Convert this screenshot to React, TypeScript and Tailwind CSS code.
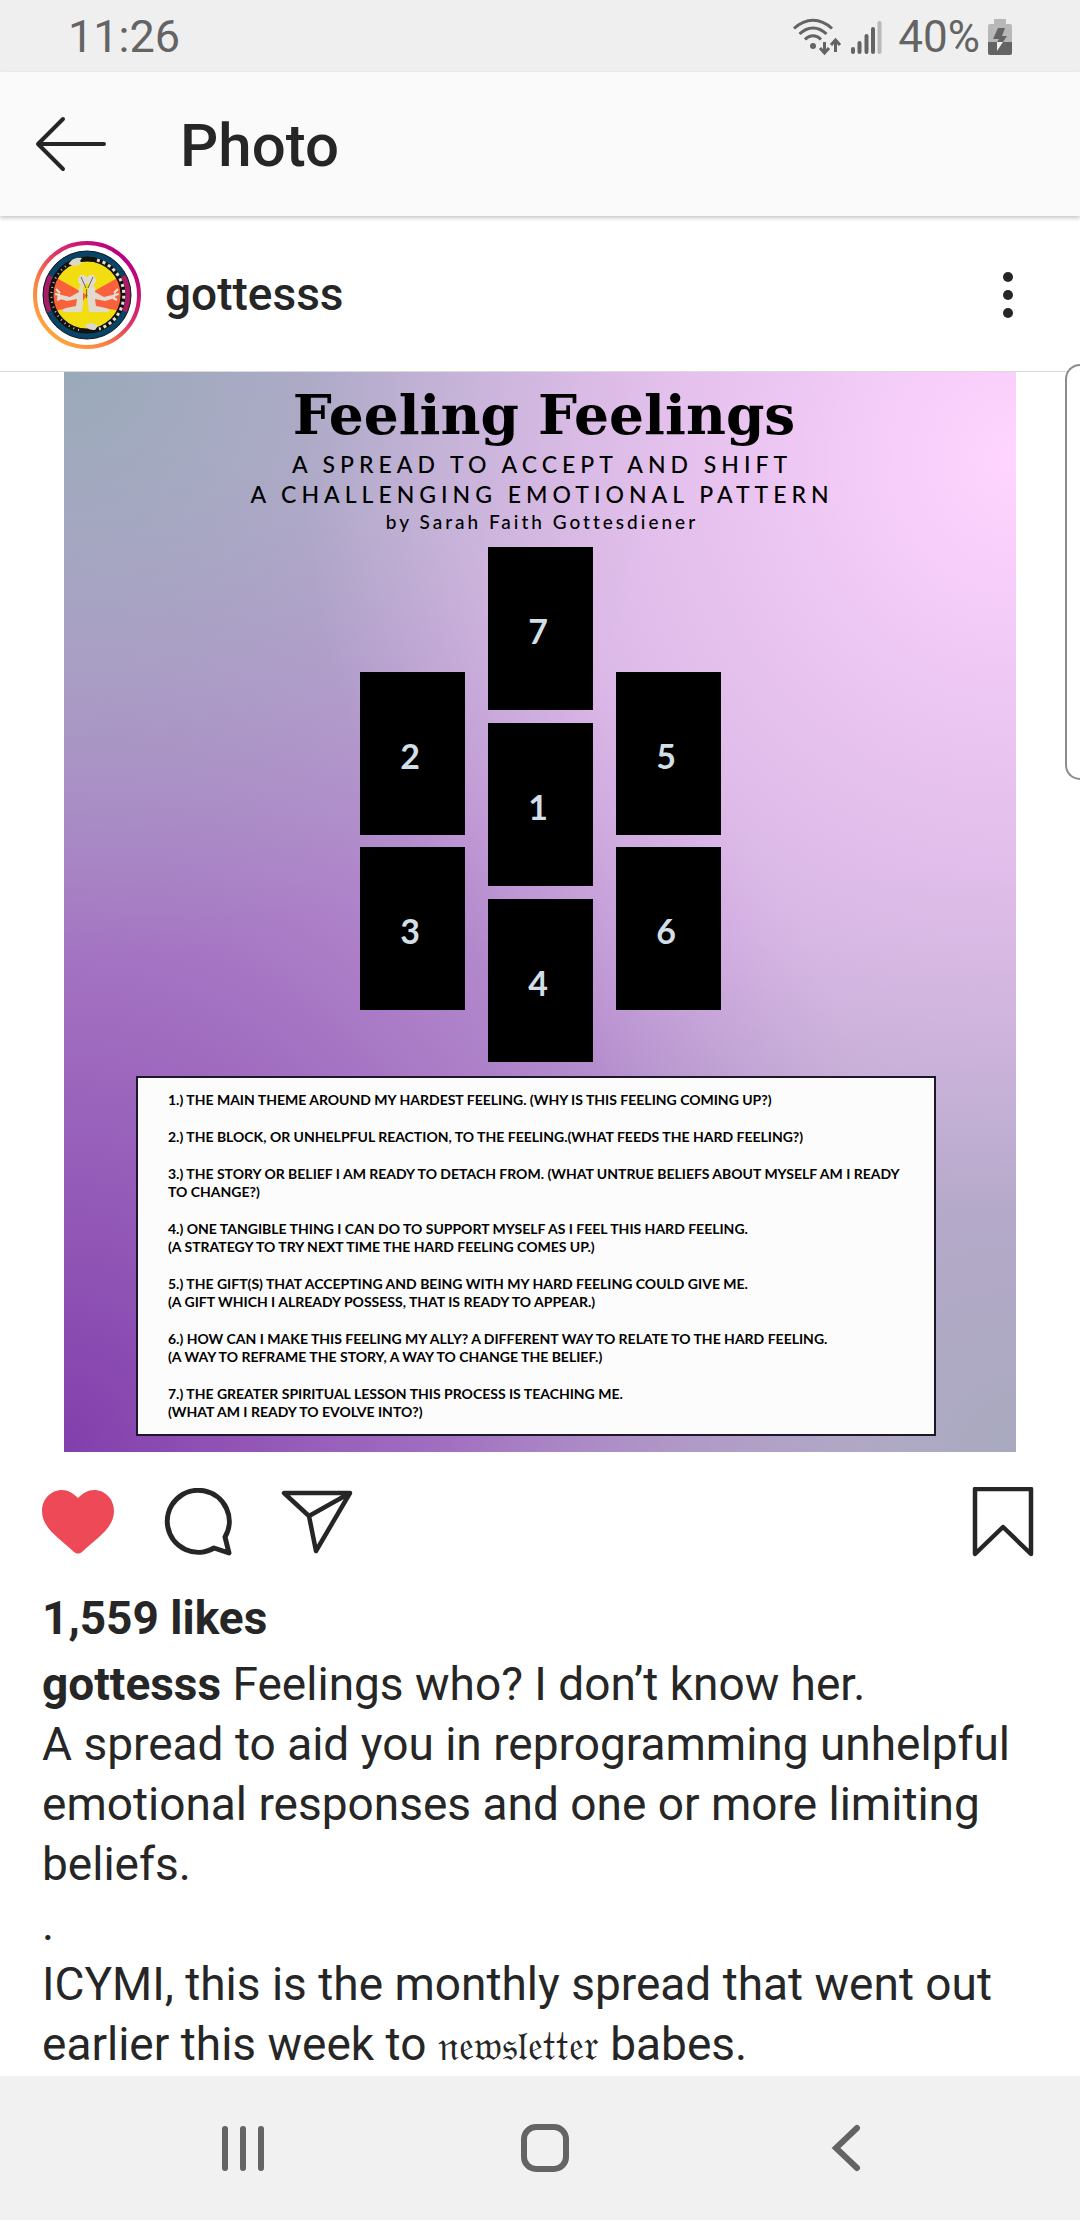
const prompts: string[][] = [
  ["1.) THE MAIN THEME AROUND MY HARDEST FEELING. (WHY IS THIS FEELING COMING UP?)"],
  ["2.) THE BLOCK, OR UNHELPFUL REACTION, TO THE FEELING.(WHAT FEEDS THE HARD FEELING?)"],
  ["3.) THE STORY OR BELIEF I AM READY TO DETACH FROM. (WHAT UNTRUE BELIEFS ABOUT MYSELF AM I READY TO CHANGE?)"],
  ["4.) ONE TANGIBLE THING I CAN DO TO SUPPORT MYSELF AS I FEEL THIS HARD FEELING.", "(A STRATEGY TO TRY NEXT TIME THE HARD FEELING COMES UP.)"],
  ["5.) THE GIFT(S) THAT ACCEPTING AND BEING WITH MY HARD FEELING COULD GIVE ME.", "(A GIFT WHICH I ALREADY POSSESS, THAT IS READY TO APPEAR.)"],
  ["6.) HOW CAN I MAKE THIS FEELING MY ALLY? A DIFFERENT WAY TO RELATE TO THE HARD FEELING.", "(A WAY TO REFRAME THE STORY, A WAY TO CHANGE THE BELIEF.)"],
  ["7.) THE GREATER SPIRITUAL LESSON THIS PROCESS IS TEACHING ME.", "(WHAT AM I READY TO EVOLVE INTO?)"],
];

function WifiIcon() {
  return (
    <svg width="50" height="38" viewBox="0 0 50 38" fill="none" stroke="#646464" strokeWidth="3" aria-hidden="true">
      <path d="M2 10.500C14-.5 28-.5 40 10.500M7.500 16C16 8 26 8 34.500 16M13 21.500C18 16.500 24 16.500 29 21.500" />
      <circle cx="21" cy="28" r="3" fill="#646464" stroke="none" />
      <path d="M32.500 24v10M28 30l4.500 5 4.500-5M43.500 34V22M39 27l4.500-5 4.500 5" />
    </svg>
  );
}

function SignalIcon() {
  return (
    <svg width="32" height="36" viewBox="0 0 32 36" strokeWidth="4" strokeLinecap="round" stroke="#646464" aria-hidden="true">
      <path d="M3 30v3M9.500 24v9M16.500 17v16M23 10v23" />
      <path d="M29.500 4v29" stroke="#b8b8b8" />
    </svg>
  );
}

function BatteryIcon() {
  return (
    <svg width="24" height="36" viewBox="0 0 24 36" aria-hidden="true">
      <path d="M6 0h12v5h4a2 2 0 0 1 2 2v16H0V7a2 2 0 0 1 2-2h4z" fill="#b8b8b8" />
      <path d="M0 23h24v11a2 2 0 0 1-2 2H2a2 2 0 0 1-2-2z" fill="#646464" />
      <path d="M10 9h7l-3 8h5l-4 6H9l2-3H5z" fill="#646464" />
      <path d="M9 23h6L9 32z" fill="#f0f0f0" />
    </svg>
  );
}

function Avatar() {
  return (
    <svg className="size-27" viewBox="0 0 108 108" role="img" aria-label="gottesss profile picture">
      <defs>
        <linearGradient id="ring" x1="0.15" y1="0.9" x2="0.85" y2="0.15">
          <stop offset="0" stopColor="#ffa53c" />
          <stop offset="0.3" stopColor="#f98044" />
          <stop offset="0.6" stopColor="#dd3666" />
          <stop offset="1" stopColor="#bb007f" />
        </linearGradient>
        <clipPath id="face"><circle cx="54" cy="54" r="44" /></clipPath>
        <clipPath id="disc"><circle cx="54" cy="54" r="34" /></clipPath>
      </defs>
      <circle cx="54" cy="54" r="52" fill="#fff" stroke="url(#ring)" strokeWidth="4" />
      <g clipPath="url(#face)">
        <rect width="108" height="108" fill="#084466" />
        <path d="M54 54 8 30v44zM54 54l46-24v44z" fill="#a81c63" />
      </g>
      <circle cx="54" cy="54" r="44" fill="none" stroke="#101820" strokeWidth="1" />
      <g clipPath="url(#disc)">
        <rect width="108" height="108" fill="#f2de10" />
        <path d="M54 54 18 34v36l28-4zM54 54l36-20v36l-28-4z" fill="#f9603c" />
      </g>
      <circle cx="54" cy="54" r="36" fill="none" stroke="#14120f" strokeWidth="5" />
      <path d="M64 19A36 36 0 0 1 66 88" fill="none" stroke="#e4e0d6" strokeWidth="3" strokeDasharray="3 3" />
      <path d="M46 89A36 36 0 0 1 40 21" fill="none" stroke="#c9c4b8" strokeWidth="2" strokeDasharray="1 4" />
      <path d="M36 23c2-5 7-7 13-6l-2 3 2 2c-4 3-8 4-13 1zM52 84c5-3 10-2 13 1l-3 4c-5 0-8-1-10-5z" fill="#ddd8cd" />
      <g fill="#e1dbcf">
        <path d="M50 44c-4 0-5 4-4 7l-9 5-12-3-1 4 10 3 10-2-1 7-10 2c-4 1-5 4-1 4h17l1-9V48z" />
        <path d="M58 44c4 0 5 4 4 7l9 5 12-3-1 4-10 3-10-2 1 7 10 2c4 1 5 4 1 4H56l-1-9V48z" />
        <path d="M45 41c0-9 7-9 9-4 2-5 9-5 9 4l-5 5-4-4-4 4z" />
      </g>
      <path d="M48 36l5 11M60 36l-5 11M53.500 48v9" stroke="#6d665b" strokeWidth="1" fill="none" />
      <path d="m23 48 4 4m-5 1 5 1m-3 5 4-2M85 48l-4 4m5 1-5 1m3 5-4-2" stroke="#ece6db" strokeWidth="2" />
    </svg>
  );
}

function Card({ n }: { n: number }) {
  return (
    <div className="flex h-[163px] items-center justify-center bg-black pt-1 pr-1 font-['Lato',sans-serif] text-[34px] font-bold text-[#d3dfe6]">
      {n}
    </div>
  );
}

function Poster() {
  return (
    <section className="mx-16 bg-[#c8aada] bg-[radial-gradient(ellipse_75%_70%_at_100%_8%,#ffd5ff_0%,#ffd5ff00_100%),radial-gradient(ellipse_65%_55%_at_0%_0%,#9aaab9_0%,#9aaab900_100%),radial-gradient(ellipse_60%_55%_at_100%_100%,#a8a9be_0%,#a8a9be00_100%),radial-gradient(ellipse_90%_95%_at_0%_100%,#823fac_0%,#823fac00_100%)] pb-4 text-black">
      <div className="flex flex-col items-center pt-[9px] text-center font-['Lato',sans-serif]">
        <h2 className="pl-2 font-['DejaVu_Serif',serif] text-[55px] leading-[68px] font-bold">Feeling Feelings</h2>
        <p className="pl-1 text-[23px] leading-[30px] font-medium tracking-[5px]">A SPREAD TO ACCEPT AND SHIFT</p>
        <p className="pl-1 text-[23px] leading-[30px] font-medium tracking-[5px]">A CHALLENGING EMOTIONAL PATTERN</p>
        <p className="pl-1 text-[19px] leading-[26px] font-medium tracking-[3px]">by Sarah Faith Gottesdiener</p>
      </div>
      <div className="mt-3 flex items-end justify-center gap-[23px]">
        <div className="mb-[52px] flex w-[105px] flex-col gap-3"><Card n={2} /><Card n={3} /></div>
        <div className="flex w-[105px] flex-col gap-[13px]"><Card n={7} /><Card n={1} /><Card n={4} /></div>
        <div className="mb-[52px] flex w-[105px] flex-col gap-3"><Card n={5} /><Card n={6} /></div>
      </div>
      <ul className="mt-[14px] mr-20 ml-18 flex flex-col gap-[19px] border-2 border-[#1d1728] bg-[#fcfcfc] py-[13px] pr-8 pl-[30px] font-['Lato',sans-serif] text-[14px] leading-[18px] font-bold">
        {prompts.map((lines) => (
          <li key={lines[0]}>{lines.map((l) => <p key={l}>{l}</p>)}</li>
        ))}
      </ul>
    </section>
  );
}

export default function App() {
  return (
    <div className="relative flex min-h-screen flex-col overflow-hidden bg-white font-['Roboto',sans-serif] text-[#262626]">
      <div className="flex h-18 items-center justify-between bg-[#efefef] pt-[2px] pr-17 pl-17 text-[#646464]">
        <span className="text-[45px]">11:26</span>
        <div className="flex items-center">
          <WifiIcon />
          <span className="ml-2"><SignalIcon /></span>
          <span className="ml-4 text-[44px]">40%</span>
          <span className="ml-2"><BatteryIcon /></span>
        </div>
      </div>

      <header className="z-10 flex h-36 items-center bg-[#fafafa] pl-[34px] shadow-[0_2px_4px_#0000003a]">
        <button aria-label="Back">
          <svg width="74" height="56" viewBox="0 0 74 56" fill="none" stroke="#262626" strokeWidth="4" strokeLinecap="round" strokeLinejoin="round">
            <path d="M70 28H4M29 3 4 28l25 25" />
          </svg>
        </button>
        <h1 className="ml-[72px] pt-1 text-[60px] font-medium">Photo</h1>
      </header>

      <div className="flex h-39 items-center border-b border-[#dbdbdb] pt-[2px] pr-[60px] pl-[33px]">
        <Avatar />
        <a href="#gottesss" className="ml-6 text-[46px] font-medium">gottesss</a>
        <button aria-label="More options" className="ml-auto">
          <svg width="24" height="48" viewBox="0 0 24 48" fill="#262626">
            <circle cx="12" cy="6" r="5" /><circle cx="12" cy="24" r="5" /><circle cx="12" cy="42" r="5" />
          </svg>
        </button>
      </div>

      <Poster />

      <div className="flex h-34 items-center pt-1 pr-[46px] pl-[42px]">
        <button aria-label="Unlike">
          <svg width="72" height="66" viewBox="0 0 72 66" fill="#ed4956">
            <path d="M36 9C31 4 26 1 20 1 9 1 0 10 0 22c0 17 17 27 32 41 3 2 5 2 8 0C55 49 72 39 72 22 72 10 63 1 52 1 46 1 41 4 36 9z" />
          </svg>
        </button>
        <button aria-label="Comment" className="ml-[50px]">
          <svg width="68" height="68" viewBox="0 0 68 68" fill="none" stroke="#262626" strokeWidth="5" strokeLinejoin="round">
            <path d="M61 49A31 31 0 1 0 50 60l15 5z" />
          </svg>
        </button>
        <button aria-label="Share" className="ml-[49px]">
          <svg width="72" height="66" viewBox="0 0 72 66" fill="none" stroke="#262626" strokeWidth="4.500" strokeLinejoin="round">
            <path d="M3 4h66L35 62 28 27zM28 27 69 4" />
          </svg>
        </button>
        <button aria-label="Save" className="ml-auto">
          <svg width="62" height="70" viewBox="0 0 62 70" fill="none" stroke="#262626" strokeWidth="4.500" strokeLinejoin="round">
            <path d="M3 2h56v65L31 40 3 67z" />
          </svg>
        </button>
      </div>

      <div className="px-[42px] text-[46px] leading-[60px]">
        <p className="font-bold">1,559 likes</p>
        <p className="mt-[6px]"><a href="#gottesss" className="font-bold">gottesss</a> Feelings who? I don’t know her.</p>
        <p>A spread to aid you in reprogramming unhelpful emotional responses and one or more limiting beliefs.</p>
        <p>.</p>
        <p>ICYMI, this is the monthly spread that went out earlier this week to <span className="text-[41px] leading-none">𝔫𝔢𝔴𝔰𝔩𝔢𝔱𝔱𝔢𝔯</span> babes.</p>
      </div>

      <nav className="mt-auto flex h-36 items-center justify-around bg-[#f1f1f1] pr-[82px] pl-[92px]">
        <button aria-label="Recent apps">
          <svg width="48" height="48" viewBox="0 0 48 48" stroke="#646464" strokeWidth="6" strokeLinecap="round"><path d="M6 5v39M24 5v39M42 5v39" /></svg>
        </button>
        <button aria-label="Home">
          <svg width="50" height="50" viewBox="0 0 50 50" fill="none" stroke="#646464" strokeWidth="6"><rect x="4" y="4" width="42" height="42" rx="12" /></svg>
        </button>
        <button aria-label="Go back">
          <svg width="48" height="48" viewBox="0 0 48 48" fill="none" stroke="#646464" strokeWidth="6" strokeLinecap="round"><path d="M34 4 13 24l21 20" /></svg>
        </button>
      </nav>

      <div className="absolute top-[364px] right-0 z-20 h-[416px] w-[15px] rounded-l-[16px] border-2 border-r-0 border-[#8c8c8c] bg-white" />
    </div>
  );
}
